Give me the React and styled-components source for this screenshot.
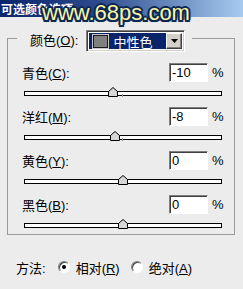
import React from 'react';
import styled, { createGlobalStyle } from 'styled-components';

const Global = createGlobalStyle`
  html, body { margin: 0; padding: 0; background: #ececec; }
  body {
    font-family: "Liberation Sans", "Noto Sans CJK SC", sans-serif;
    font-size: 13px;
    color: #000;
  }
`;

const Window = styled.div`
  position: relative;
  width: 243px;
  height: 289px;
  background: #ececec;
  overflow: hidden;
`;

const TitleBar = styled.div`
  height: 17px;
  background: linear-gradient(90deg, #0a246a 0%, #2c4a8c 40%, #a6caf0 100%);
  color: #fff;
  font-family: "Noto Sans CJK SC", sans-serif;
  font-weight: bold;
  font-size: 12px;
  line-height: 17px;
  padding-left: 1px;
  white-space: nowrap;
`;

const Watermark = styled.div`
  position: absolute;
  left: 42px;
  top: 2px;
  font-family: "Liberation Sans", sans-serif;
  font-size: 22px;
  line-height: 22px;
  color: #fbf5a6;
  white-space: nowrap;
  text-shadow:
    2px 0 0 #0c2752, -2px 0 0 #0c2752, 0 2px 0 #0c2752, 0 -2px 0 #0c2752,
    1.5px 1.5px 0 #0c2752, -1.5px 1.5px 0 #0c2752, 1.5px -1.5px 0 #0c2752, -1.5px -1.5px 0 #0c2752,
    0 0 3px #0c2752;
`;

const Group = styled.fieldset`
  margin: 8px 0 0 7px;
  width: 228px;
  box-sizing: border-box;
  padding: 11px 0 3px;
  border: 1px solid #9a9a9a;
  min-width: 0;
`;

const Legend = styled.legend`
  margin-left: 9px;
  padding: 5px 7px 0 13px;
`;

const LegendInner = styled.div`
  display: flex;
  align-items: center;
  gap: 8px;
`;

const Text = styled.span`
  white-space: nowrap;
  line-height: 16px;
`;

const Combo = styled.div`
  display: flex;
  width: 99px;
  height: 22px;
  box-sizing: border-box;
  border: 1px solid;
  border-color: #808080 #fff #fff #808080;
  box-shadow: inset 1px 1px 0 #404040, inset -1px -1px 0 #d4d0c8;
  padding: 2px 2px 2px 2px;
  background: #fff;
`;

const Selection = styled.div`
  flex: 1;
  display: flex;
  align-items: center;
  gap: 5px;
  padding-left: 4px;
  background: #0a246a;
  color: #fff;
  font-size: 13px;
`;

const Swatch = styled.div`
  width: 15px;
  height: 13px;
  box-sizing: border-box;
  background: #808080;
  border: 1px solid #1a1a1a;
  box-shadow: 0 0 0 1px #c8c8c8;
`;

const ArrowButton = styled.div`
  width: 16px;
  display: flex;
  align-items: center;
  justify-content: center;
  box-sizing: border-box;
  background: #d4d0c8;
  border: 1px solid;
  border-color: #fff #404040 #404040 #fff;
  box-shadow: inset -1px -1px 0 #808080;
`;

const Rows = styled.div`
  display: flex;
  flex-direction: column;
  gap: 8px;
`;

const RowTop = styled.div`
  display: flex;
  align-items: center;
  height: 19px;
  padding: 0 11px 0 14px;
`;

const Label = styled.span`
  flex: 1;
  white-space: nowrap;
`;

const NumBox = styled.div`
  width: 39px;
  height: 19px;
  box-sizing: border-box;
  border: 1px solid;
  border-color: #808080 #fff #fff #808080;
  box-shadow: inset 1px 1px 0 #404040;
  background: #fff;
  padding-left: 2px;
  line-height: 17px;
  font-size: 13px;
`;

const Pct = styled.span`
  margin-left: 4px;
  width: 11px;
  font-size: 13px;
`;

const Slider = styled.div`
  position: relative;
  height: 12px;
  margin: 5px 12px 0 16px;
  padding-top: 4px;
  box-sizing: border-box;
`;

const Track = styled.div`
  height: 5px;
  box-sizing: border-box;
  border: 1px solid #000;
  background: #fff;
`;

const CenterTick = styled.div`
  position: absolute;
  left: 98px;
  top: 7px;
  width: 1px;
  height: 3px;
  background: #9a9a9a;
`;

const Thumb = styled.svg`
  position: absolute;
  top: 0;
  width: 10px;
  height: 10px;
  display: block;
`;

const Method = styled.div`
  display: flex;
  align-items: center;
  height: 16px;
  margin-top: 24px;
  padding-left: 16px;
`;

const RadioLabel = styled.span`
  white-space: nowrap;
  margin-right: ${(p) => p.$mr || 0}px;
`;

const Radio = styled.span`
  width: 12px;
  height: 12px;
  box-sizing: border-box;
  border-radius: 50%;
  border: 1px solid;
  border-color: #808080 #fff #fff #808080;
  box-shadow: inset 1px 1px 0 #404040;
  background: #fff;
  display: flex;
  align-items: center;
  justify-content: center;
  margin: 0 6px 0 ${(p) => p.$ml || 0}px;
  &::after {
    content: "";
    width: 4px;
    height: 4px;
    border-radius: 50%;
    background: ${(p) => (p.$checked ? '#000' : 'transparent')};
  }
`;

const TRACK_W = 197;

function SliderRow({ label, u, value }) {
  const center = ((value + 100) / 200) * TRACK_W;
  const idx = label.indexOf('(');
  return (
    <div>
      <RowTop>
        <Label>
          {label.slice(0, idx + 1)}
          <u>{u}</u>
          {label.slice(idx + 2)}
        </Label>
        <NumBox>{value}</NumBox>
        <Pct>%</Pct>
      </RowTop>
      <Slider>
        <Track />
        <CenterTick />
        <Thumb viewBox="0 0 10 10" style={{ left: Math.round(center - 5) }}>
          <path d="M0.5 9.5 V4.5 L5 0.5 L9.5 4.5 V9.5 Z" fill="#d6d6d6" stroke="#000" strokeWidth="1" />
        </Thumb>
      </Slider>
    </div>
  );
}

export default function App() {
  const rows = [
    { label: '青色(C):', u: 'C', value: -10 },
    { label: '洋红(M):', u: 'M', value: -8 },
    { label: '黄色(Y):', u: 'Y', value: 0 },
    { label: '黑色(B):', u: 'B', value: 0 },
  ];
  return (
    <Window>
      <Global />
      <TitleBar>可选颜色选项</TitleBar>
      <Watermark>www.68ps.com</Watermark>
      <Group>
        <Legend>
          <LegendInner>
            <Text>
              颜色(<u>O</u>):
            </Text>
            <Combo>
              <Selection>
                <Swatch />
                <span>中性色</span>
              </Selection>
              <ArrowButton>
                <svg width="7" height="4" viewBox="0 0 7 4">
                  <path d="M0 0 H7 L3.5 4 Z" fill="#000" />
                </svg>
              </ArrowButton>
            </Combo>
          </LegendInner>
        </Legend>
        <Rows>
          {rows.map((r) => (
            <SliderRow key={r.u} {...r} />
          ))}
        </Rows>
      </Group>
      <Method>
        <RadioLabel>方法:</RadioLabel>
        <Radio $checked $ml={12} />
        <RadioLabel>
          相对(<u>R</u>)
        </RadioLabel>
        <Radio $ml={11} />
        <RadioLabel>
          绝对(<u>A</u>)
        </RadioLabel>
      </Method>
    </Window>
  );
}
